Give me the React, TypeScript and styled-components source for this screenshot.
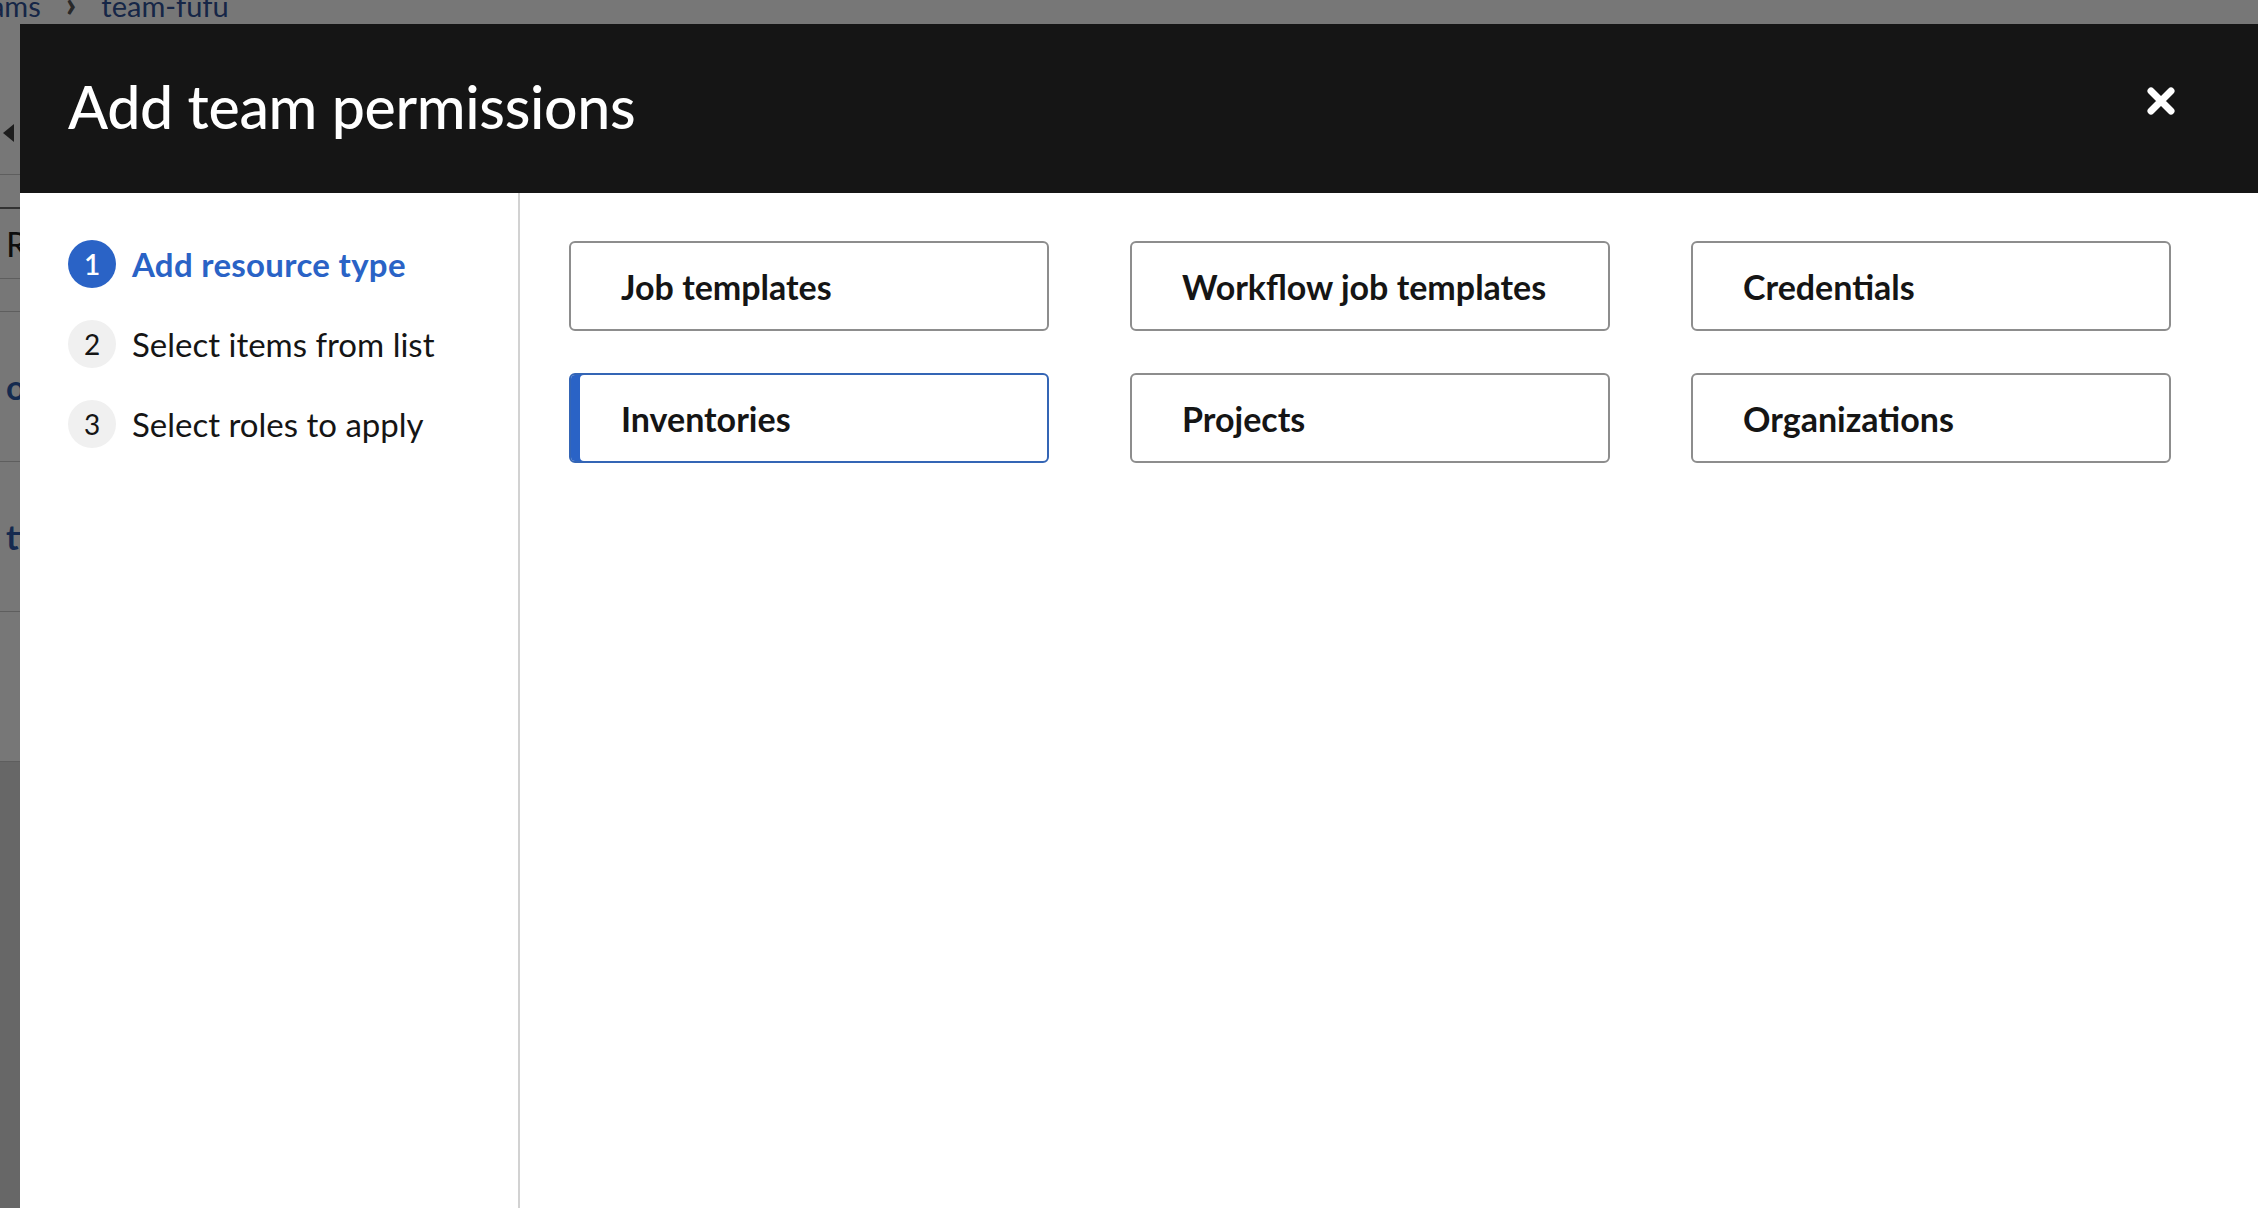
import React from 'react';
import styled, { createGlobalStyle } from 'styled-components';

const colors = {
	dark: '#151515',
	blue: '#2a63c6',
	blueBorder: '#3465b5',
	tileBorder: '#8d8d8d',
	divider: '#d2d2d2',
	stepBg: '#f0f0f0',
	link: '#2b57a8',
};

const steps = ['Add resource type', 'Select items from list', 'Select roles to apply'];

const resources = [
	'Job templates',
	'Workflow job templates',
	'Credentials',
	'Inventories',
	'Projects',
	'Organizations',
];

const GlobalStyle = createGlobalStyle`
	html, body {
		margin: 0;
		padding: 0;
		height: 100%;
		overflow: hidden;
		background: #ffffff;
		font-family: Lato, 'Liberation Sans', sans-serif;
	}
	* {
		box-sizing: border-box;
	}
`;

export default function App() {
	return (
		<>
			<GlobalStyle />
			<BackgroundPage>
				<Breadcrumb>
					<CrumbLink>Teams</CrumbLink>
					<Chevron>›</Chevron>
					<CrumbLink>team-fufu</CrumbLink>
				</Breadcrumb>
				<PageCard>
					<TabsRow>
						<ScrollArrow />
					</TabsRow>
					<SubRow />
					<ToolbarRow>
						<ToolbarText>Roles</ToolbarText>
					</ToolbarRow>
					<HeaderRow />
					<TableRow>
						<RowLink>oo</RowLink>
					</TableRow>
					<TableRow>
						<RowLink>tt</RowLink>
					</TableRow>
					<TableRow />
				</PageCard>
			</BackgroundPage>
			<Backdrop />
			<Modal>
				<ModalHeader>
					<Title>Add team permissions</Title>
					<CloseButton aria-label="Close">
						<svg width="30" height="30" viewBox="0 0 30 30">
							<path
								d="M5 5 L25 25 M25 5 L5 25"
								stroke="#ffffff"
								strokeWidth="7"
								strokeLinecap="round"
								fill="none"
							/>
						</svg>
					</CloseButton>
				</ModalHeader>
				<ModalBody>
					<StepNav>
						{steps.map((step, i) => (
							<StepItem key={step}>
								<StepNumber $active={i === 0}>{i + 1}</StepNumber>
								<StepLabel $active={i === 0}>{step}</StepLabel>
							</StepItem>
						))}
					</StepNav>
					<Content>
						<TileGrid>
							{resources.map((name) => (
								<Tile key={name} $selected={name === 'Inventories'}>
									{name}
								</Tile>
							))}
						</TileGrid>
					</Content>
				</ModalBody>
			</Modal>
		</>
	);
}

const BackgroundPage = styled.div`
	height: 100vh;
	background: #dcdcdc;
	display: flex;
	flex-direction: column;
`;

const Breadcrumb = styled.div`
	display: flex;
	align-items: center;
	gap: 25px;
	height: 34px;
	margin-top: -12px;
	margin-left: -39px;
	font-size: 29px;
	background: #ffffff;
	padding-bottom: 90px;
	box-sizing: content-box;
`;

const CrumbLink = styled.span`
	color: #2d4f96;
`;

const Chevron = styled.span`
	color: #555555;
	font-size: 36px;
	font-weight: 900;
	margin-top: -4px;
`;

const PageCard = styled.div`
	background: #ffffff;
	display: flex;
	flex-direction: column;
	margin-top: -20px;
`;

const TabsRow = styled.div`
	height: 83px;
	display: flex;
	align-items: center;
	padding-left: 3px;
	border-bottom: 1px solid #c8c8c8;
`;

const ScrollArrow = styled.span`
	width: 0;
	height: 0;
	border-top: 9px solid transparent;
	border-bottom: 9px solid transparent;
	border-right: 11px solid #3c3c3c;
`;

const SubRow = styled.div`
	height: 34px;
	border-bottom: 2px solid #6a6a6a;
`;

const ToolbarRow = styled.div`
	height: 70px;
	display: flex;
	align-items: center;
	padding-left: 6px;
	border-bottom: 1px solid #c8c8c8;
`;

const ToolbarText = styled.span`
	font-size: 34px;
	color: #1a1a1a;
`;

const HeaderRow = styled.div`
	height: 33px;
	border-bottom: 1px solid #c8c8c8;
`;

const TableRow = styled.div`
	height: 150px;
	display: flex;
	align-items: center;
	padding-left: 6px;
	border-bottom: 1px solid #c8c8c8;
`;

const RowLink = styled.span`
	font-size: 34px;
	font-weight: 700;
	color: ${colors.link};
`;

const Backdrop = styled.div`
	position: fixed;
	inset: 0;
	background: rgba(3, 3, 3, 0.54);
`;

const Modal = styled.div`
	position: fixed;
	left: 20px;
	top: 24px;
	right: 0;
	bottom: 0;
	background: #ffffff;
	display: flex;
	flex-direction: column;
	overflow: hidden;
`;

const ModalHeader = styled.header`
	height: 169px;
	flex-shrink: 0;
	background: ${colors.dark};
	display: flex;
	align-items: center;
	justify-content: space-between;
	padding: 0 82px 0 48px;
`;

const Title = styled.h1`
	margin: 0;
	font-size: 59px;
	font-weight: 500;
	color: #ffffff;
	letter-spacing: -0.3px;
	margin-top: -4px;
`;

const CloseButton = styled.button`
	border: 0;
	background: none;
	padding: 0;
	width: 30px;
	height: 30px;
	display: flex;
	margin-top: -16px;
	cursor: pointer;
`;

const ModalBody = styled.div`
	flex: 1;
	display: grid;
	grid-template-columns: 500px 1fr;
`;

const StepNav = styled.nav`
	border-right: 2px solid ${colors.divider};
	padding: 47px 0 0 48px;
	display: flex;
	flex-direction: column;
	gap: 32px;
`;

const StepItem = styled.div`
	display: flex;
	align-items: center;
	gap: 16px;
	height: 48px;
`;

const StepNumber = styled.span<{ $active?: boolean }>`
	width: 48px;
	height: 48px;
	border-radius: 50%;
	flex-shrink: 0;
	display: flex;
	align-items: center;
	justify-content: center;
	font-size: 28px;
	font-weight: ${({ $active }) => ($active ? 600 : 400)};
	background: ${({ $active }) => ($active ? colors.blue : colors.stepBg)};
	color: ${({ $active }) => ($active ? '#ffffff' : colors.dark)};
`;

const StepLabel = styled.span<{ $active?: boolean }>`
	font-size: 33px;
	font-weight: ${({ $active }) => ($active ? 700 : 400)};
	color: ${({ $active }) => ($active ? colors.blue : colors.dark)};
	letter-spacing: ${({ $active }) => ($active ? '0.3px' : '0')};
`;

const Content = styled.main`
	padding: 48px 0 0 49px;
`;

const TileGrid = styled.div`
	display: grid;
	grid-template-columns: repeat(3, 480px);
	column-gap: 81px;
	row-gap: 42px;
`;

const Tile = styled.div<{ $selected?: boolean }>`
	height: 90px;
	display: flex;
	align-items: center;
	padding-left: 50px;
	border-radius: 6px;
	border: 2px solid ${({ $selected }) => ($selected ? colors.blueBorder : colors.tileBorder)};
	${({ $selected }) => $selected && `box-shadow: inset 9px 0 0 ${colors.blue};`}
	font-size: 34px;
	font-weight: 700;
	color: ${colors.dark};
	cursor: pointer;
`;
